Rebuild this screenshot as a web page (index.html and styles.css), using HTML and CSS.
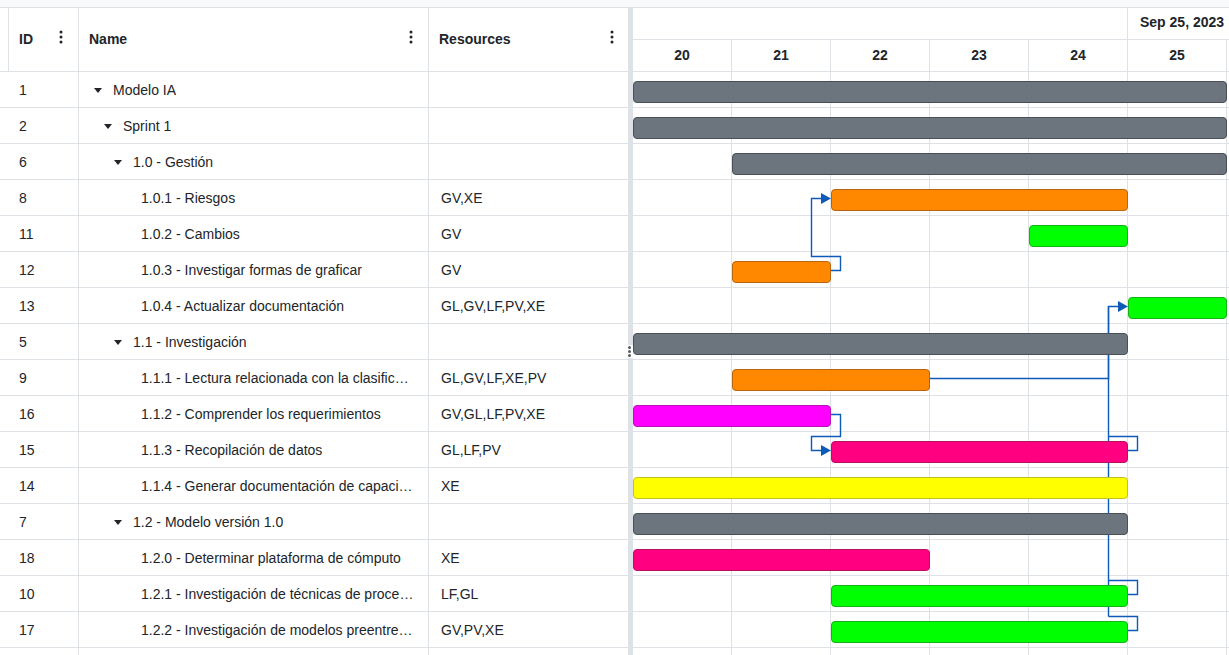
FILE: index.html
```html
<!DOCTYPE html>
<html lang="es">
<head>
<meta charset="utf-8">
<title>Gantt</title>
<link rel="stylesheet" href="styles.css">
</head>
<body>
<div class="app">
  <div class="topbar"></div>
  <div class="main">
    <section class="grid-pane">
      <div class="grid-head">
        <div class="head-spacer"></div>
        <div class="hcell c-id"><span>ID</span><svg class="kebab" width="4" height="14" viewBox="0 0 4 14"><circle cx="2" cy="2" r="1.5"/><circle cx="2" cy="7" r="1.5"/><circle cx="2" cy="12" r="1.5"/></svg></div>
        <div class="hcell c-name"><span>Name</span><svg class="kebab" width="4" height="14" viewBox="0 0 4 14"><circle cx="2" cy="2" r="1.5"/><circle cx="2" cy="7" r="1.5"/><circle cx="2" cy="12" r="1.5"/></svg></div>
        <div class="hcell c-res"><span>Resources</span><svg class="kebab" width="4" height="14" viewBox="0 0 4 14"><circle cx="2" cy="2" r="1.5"/><circle cx="2" cy="7" r="1.5"/><circle cx="2" cy="12" r="1.5"/></svg></div>
      </div>
      <div class="grid-body">
        <div class="row"><div class="cell b-id">1</div><div class="cell b-name lvl1"><i class="toggle"></i><span class="txt">Modelo IA</span></div><div class="cell b-res"></div></div>
        <div class="row"><div class="cell b-id">2</div><div class="cell b-name lvl2"><i class="toggle"></i><span class="txt">Sprint 1</span></div><div class="cell b-res"></div></div>
        <div class="row"><div class="cell b-id">6</div><div class="cell b-name lvl3"><i class="toggle"></i><span class="txt">1.0 - Gestión</span></div><div class="cell b-res"></div></div>
        <div class="row"><div class="cell b-id">8</div><div class="cell b-name leaf"><span class="txt">1.0.1 - Riesgos</span></div><div class="cell b-res">GV,XE</div></div>
        <div class="row"><div class="cell b-id">11</div><div class="cell b-name leaf"><span class="txt">1.0.2 - Cambios</span></div><div class="cell b-res">GV</div></div>
        <div class="row"><div class="cell b-id">12</div><div class="cell b-name leaf"><span class="txt">1.0.3 - Investigar formas de graficar</span></div><div class="cell b-res">GV</div></div>
        <div class="row"><div class="cell b-id">13</div><div class="cell b-name leaf"><span class="txt">1.0.4 - Actualizar documentación</span></div><div class="cell b-res">GL,GV,LF,PV,XE</div></div>
        <div class="row"><div class="cell b-id">5</div><div class="cell b-name lvl3"><i class="toggle"></i><span class="txt">1.1 - Investigación</span></div><div class="cell b-res"></div></div>
        <div class="row"><div class="cell b-id">9</div><div class="cell b-name leaf"><span class="txt">1.1.1 - Lectura relacionada con la clasificación de imágenes</span></div><div class="cell b-res">GL,GV,LF,XE,PV</div></div>
        <div class="row"><div class="cell b-id">16</div><div class="cell b-name leaf"><span class="txt">1.1.2 - Comprender los requerimientos</span></div><div class="cell b-res">GV,GL,LF,PV,XE</div></div>
        <div class="row"><div class="cell b-id">15</div><div class="cell b-name leaf"><span class="txt">1.1.3 - Recopilación de datos</span></div><div class="cell b-res">GL,LF,PV</div></div>
        <div class="row"><div class="cell b-id">14</div><div class="cell b-name leaf"><span class="txt">1.1.4 - Generar documentación de capacitación</span></div><div class="cell b-res">XE</div></div>
        <div class="row"><div class="cell b-id">7</div><div class="cell b-name lvl3"><i class="toggle"></i><span class="txt">1.2 - Modelo versión 1.0</span></div><div class="cell b-res"></div></div>
        <div class="row"><div class="cell b-id">18</div><div class="cell b-name leaf"><span class="txt">1.2.0 - Determinar plataforma de cómputo</span></div><div class="cell b-res">XE</div></div>
        <div class="row"><div class="cell b-id">10</div><div class="cell b-name leaf"><span class="txt">1.2.1 - Investigación de técnicas de procesamiento</span></div><div class="cell b-res">LF,GL</div></div>
        <div class="row"><div class="cell b-id">17</div><div class="cell b-name leaf"><span class="txt">1.2.2 - Investigación de modelos preentrenados</span></div><div class="cell b-res">GV,PV,XE</div></div>
      </div>
    </section>

    <div class="splitter">
      <svg class="handle" width="7" height="13" viewBox="0 0 7 13"><rect width="7" height="13" fill="#fff"/><circle cx="3.5" cy="2.5" r="1.5"/><circle cx="3.5" cy="6.5" r="1.5"/><circle cx="3.5" cy="10.5" r="1.5"/></svg>
    </div>

    <section class="chart-pane">
      <div class="chart-head">
        <div class="scale-top">
          <div class="top-spacer"></div>
          <div class="top-date">Sep 25, 2023</div>
        </div>
        <div class="scale-days">
          <div class="day">20</div><div class="day">21</div><div class="day">22</div><div class="day">23</div><div class="day">24</div><div class="day">25</div>
        </div>
      </div>
      <div class="chart-body">
        <svg class="links" width="600" height="600" viewBox="0 0 600 600">
          <g fill="none" stroke="#0d5ab9" stroke-width="1.4">
            <path d="M197 198.5 H207.5 V184.5 H178.5 V126.5 H189"/>
            <path d="M197 342.5 H207.5 V364.5 H178.5 V378.5 H189"/>
            <path d="M296 306.5 H475.5 V234.5 H486"/>
            <path d="M475.5 234.5 V544.5"/>
            <path d="M494 378.5 H504.5 V364.5 H475.5"/>
            <path d="M494 522.5 H504.5 V508.5 H475.5"/>
            <path d="M494 558.5 H504.5 V544.5 H475.5"/>
          </g>
          <g fill="#0d5ab9">
            <polygon points="188,121 198,126.5 188,132"/>
            <polygon points="188,373 198,378.5 188,384"/>
            <polygon points="485,229 495,234.5 485,240"/>
          </g>
        </svg>
        <div class="trow"><div class="bar summary" style="left:0px;width:594px"></div></div>
        <div class="trow"><div class="bar summary" style="left:0px;width:594px"></div></div>
        <div class="trow"><div class="bar summary" style="left:99px;width:495px"></div></div>
        <div class="trow"><div class="bar orange" style="left:198px;width:297px"></div></div>
        <div class="trow"><div class="bar green" style="left:396px;width:99px"></div></div>
        <div class="trow"><div class="bar orange" style="left:99px;width:99px"></div></div>
        <div class="trow"><div class="bar green" style="left:495px;width:99px"></div></div>
        <div class="trow"><div class="bar summary" style="left:0px;width:495px"></div></div>
        <div class="trow"><div class="bar orange" style="left:99px;width:198px"></div></div>
        <div class="trow"><div class="bar magenta" style="left:0px;width:198px"></div></div>
        <div class="trow"><div class="bar pink" style="left:198px;width:297px"></div></div>
        <div class="trow"><div class="bar yellow" style="left:0px;width:495px"></div></div>
        <div class="trow"><div class="bar summary" style="left:0px;width:495px"></div></div>
        <div class="trow"><div class="bar pink" style="left:0px;width:297px"></div></div>
        <div class="trow"><div class="bar green" style="left:198px;width:297px"></div></div>
        <div class="trow"><div class="bar green" style="left:198px;width:297px"></div></div>
      </div>
    </section>
  </div>
</div>
</body>
</html>
```

FILE: styles.css
```css
* { box-sizing: border-box; }

html, body {
  margin: 0;
  padding: 0;
  height: 100%;
  background: #fff;
}

body {
  font-family: "Liberation Sans", Arial, sans-serif;
  font-size: 14px;
  color: #212529;
  overflow: hidden;
}

.app {
  display: flex;
  flex-direction: column;
  height: 100vh;
}

.topbar {
  height: 8px;
  flex: none;
  background: #f8f9fa;
  border-bottom: 1px solid #dee2e6;
}

.main {
  flex: 1;
  display: flex;
  min-height: 0;
}

/* ---------- left grid ---------- */
.grid-pane {
  width: 628px;
  flex: none;
  display: flex;
  flex-direction: column;
}

.grid-head {
  height: 64px;
  flex: none;
  display: flex;
  border-bottom: 1px solid #dee2e6;
}

.head-spacer {
  width: 9px;
  border-right: 1px solid #dee2e6;
}

.hcell {
  display: flex;
  align-items: center;
  justify-content: space-between;
  padding: 0 15px 2px 10px;
  font-weight: bold;
  border-right: 1px solid #dee2e6;
}

.hcell.c-id { width: 70px; }
.hcell.c-name { width: 350px; }
.hcell.c-res { width: 199px; border-right: none; padding-right: 14px; }

.kebab {
  fill: #212529;
  margin-top: -3px;
}

.grid-body {
  flex: 1;
  background:
    linear-gradient(#dee2e6, #dee2e6) 78px 0 / 1px 100% no-repeat,
    linear-gradient(#dee2e6, #dee2e6) 428px 0 / 1px 100% no-repeat;
}

.row {
  display: flex;
  height: 36px;
  border-bottom: 1px solid #dee2e6;
}

.cell {
  display: flex;
  align-items: center;
  white-space: nowrap;
  overflow: hidden;
  padding-top: 1px;
}

.b-id {
  width: 79px;
  padding-left: 19px;
  border-right: 1px solid #dee2e6;
}

.b-name {
  width: 350px;
  padding-right: 13px;
  border-right: 1px solid #dee2e6;
}

.b-res {
  width: 199px;
  padding-left: 12px;
}

.txt {
  overflow: hidden;
  text-overflow: ellipsis;
  white-space: nowrap;
}

.toggle {
  flex: none;
  width: 0;
  height: 0;
  border-left: 4.5px solid transparent;
  border-right: 4.5px solid transparent;
  border-top: 5px solid #212529;
  margin-right: 11px;
  margin-top: 1px;
}

.lvl1 { padding-left: 15px; }
.lvl2 { padding-left: 25px; }
.lvl3 { padding-left: 35px; }
.leaf { padding-left: 62px; }

/* ---------- splitter ---------- */
.splitter {
  width: 5px;
  flex: none;
  background: #dee2e6;
  position: relative;
}

.handle {
  position: absolute;
  left: -2px;
  top: 337px;
  fill: #555b61;
}

/* ---------- chart ---------- */
.chart-pane {
  flex: 1;
  display: flex;
  flex-direction: column;
  min-width: 0;
  overflow: hidden;
}

.chart-head {
  flex: none;
  font-weight: bold;
}

.scale-top {
  height: 32px;
  display: flex;
  border-bottom: 1px solid #dee2e6;
}

.top-spacer {
  width: 495px;
  flex: none;
  border-right: 1px solid #dee2e6;
}

.top-date {
  flex: 1;
  display: flex;
  align-items: center;
  padding-left: 12px;
  padding-bottom: 3px;
  white-space: nowrap;
}

.scale-days {
  height: 32px;
  display: flex;
  border-bottom: 1px solid #dee2e6;
}

.day {
  width: 99px;
  flex: none;
  display: flex;
  align-items: center;
  justify-content: center;
  padding-bottom: 1px;
  border-right: 1px solid #dee2e6;
}

.chart-body {
  flex: 1;
  position: relative;
  background-image: linear-gradient(to right, transparent 98px, #dee2e6 98px);
  background-size: 99px 100%;
  background-repeat: repeat-x;
}

.links {
  position: absolute;
  left: 0;
  top: 0;
  z-index: 1;
  overflow: visible;
}

.trow {
  height: 36px;
  border-bottom: 1px solid #dee2e6;
  position: relative;
}

.bar {
  position: absolute;
  top: 9px;
  height: 22px;
  border-radius: 4px;
  border: 1px solid rgba(0, 0, 0, 0.3);
  z-index: 2;
}

.bar.summary { background: #6c757d; border-color: #4a5057; }
.bar.orange { background: #ff8800; border-color: #b9650f; }
.bar.green { background: #00ff00; border-color: #16b316; }
.bar.magenta { background: #ff00ff; border-color: #b813b8; }
.bar.pink { background: #ff0080; border-color: #b5125f; }
.bar.yellow { background: #ffff00; border-color: #c2c21a; }
```
